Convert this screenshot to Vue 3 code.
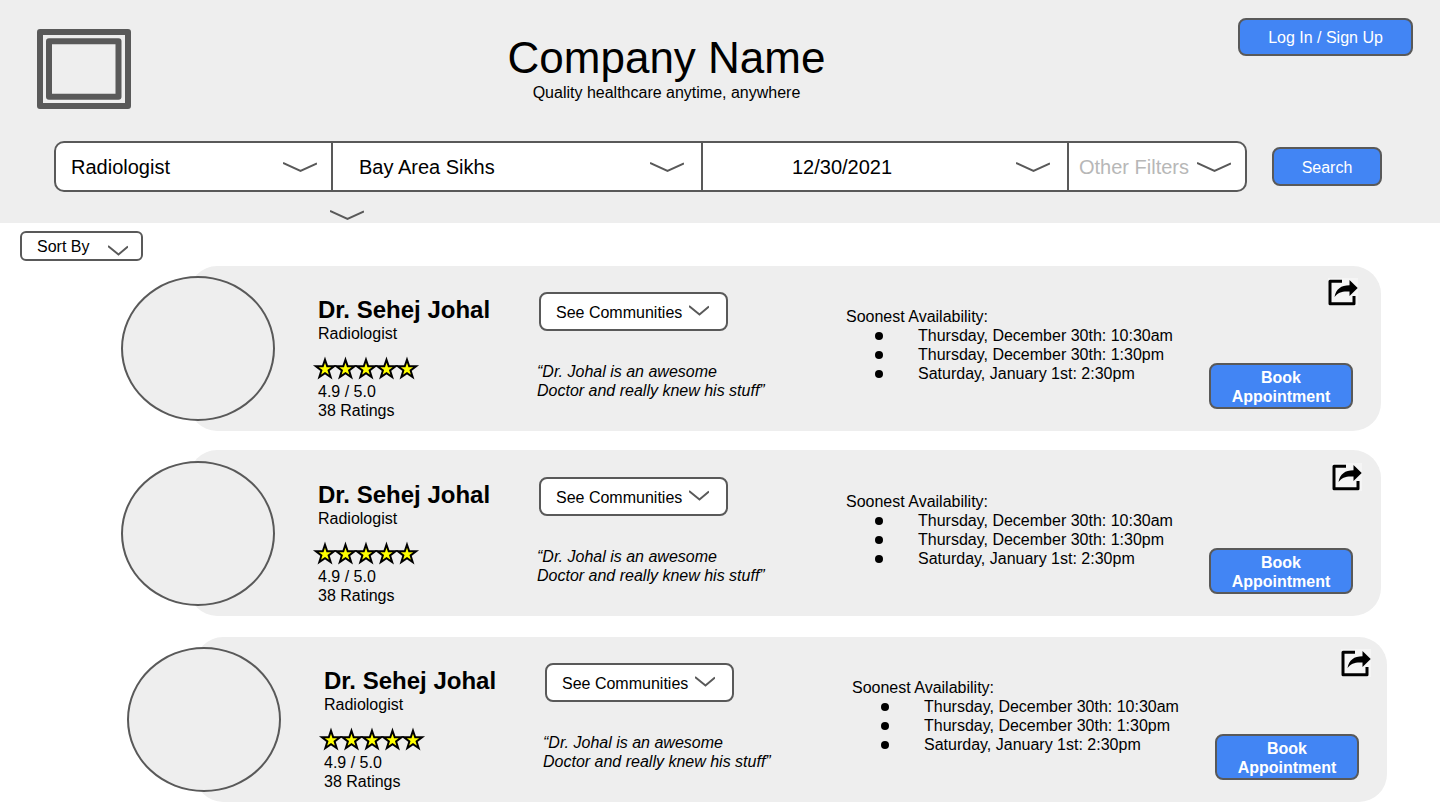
<script setup>
const filters = [
  { id: 'specialty', label: 'Specialty', value: 'Radiologist' },
  { id: 'community', label: 'Community', value: 'Bay Area Sikhs' },
  { id: 'date', label: 'Date', value: '12/30/2021' },
  { id: 'other', label: 'More filters', value: 'Other Filters' },
]

const doctors = [1, 2, 3].map((id) => ({
  id,
  name: 'Dr. Sehej Johal',
  specialty: 'Radiologist',
  score: '4.9 / 5.0',
  ratings: '38 Ratings',
  quote: ['“Dr. Johal is an awesome', 'Doctor and really knew his stuff”'],
  slots: [
    'Thursday, December 30th: 10:30am',
    'Thursday, December 30th: 1:30pm',
    'Saturday, January 1st: 2:30pm',
  ],
}))

const starCenters = [13, 33.5, 54, 74.5, 95]

function starPoints(cx, cy = 13.3, outer = 9.6, inner = 3.8) {
  return Array.from({ length: 10 }, (_, i) => {
    const r = i % 2 ? inner : outer
    const a = (Math.PI / 5) * i - Math.PI / 2
    return `${(cx + r * Math.cos(a)).toFixed(2)},${(cy + r * Math.sin(a)).toFixed(2)}`
  }).join(' ')
}
</script>

<template>
  <div class="page">
    <header class="header">
      <div class="top">
        <svg class="logo" viewBox="0 0 94 80" role="img" aria-label="Company logo">
          <rect x="3" y="3" width="88" height="74" />
          <rect x="12" y="12.300" width="69.500" height="55.500" />
        </svg>
        <div class="brand">
          <h1>Company Name</h1>
          <p>Quality healthcare anytime, anywhere</p>
        </div>
        <button type="button" class="btn login">Log In / Sign Up</button>
      </div>

      <form class="search" @submit.prevent>
        <div class="filters">
          <div v-for="f in filters" :key="f.id" class="filter" :class="f.id">
            <select :id="f.id" :aria-label="f.label">
              <option>{{ f.value }}</option>
            </select>
            <svg class="chevron wide" viewBox="0 0 34 11" aria-hidden="true">
              <path d="M0 1 L17.500 9 L34 1.500" />
            </svg>
          </div>
        </div>
        <button type="submit" class="btn submit">Search</button>
      </form>

      <svg class="wide expand" viewBox="0 0 34 11" aria-hidden="true">
        <path d="M0 1 L17.500 9 L34 1.500" />
      </svg>
    </header>

    <main>
      <div class="sort">
        <select id="sort" aria-label="Sort results">
          <option>Sort By</option>
        </select>
        <svg class="chevron small" viewBox="0 0 20 11" aria-hidden="true">
          <path d="M0 1 L10.500 9.500 L20 1.500" />
        </svg>
      </div>

      <section class="results" aria-label="Doctors">
        <article v-for="d in doctors" :key="d.id" class="card">
          <div class="avatar"></div>

          <div class="info">
            <h2>{{ d.name }}</h2>
            <p>{{ d.specialty }}</p>
            <svg class="stars" viewBox="0 0 108 24" role="img" aria-label="Five stars">
              <polygon v-for="cx in starCenters" :key="cx" :points="starPoints(cx)" />
            </svg>
            <p>{{ d.score }}</p>
            <p>{{ d.ratings }}</p>
          </div>

          <div class="about">
            <div class="communities">
              <select :id="`communities-${d.id}`" aria-label="Communities">
                <option>See Communities</option>
              </select>
              <svg class="chevron small" viewBox="0 0 20 11" aria-hidden="true">
                <path d="M0 1 L10.500 9.500 L20 1.500" />
              </svg>
            </div>
            <blockquote>{{ d.quote[0] }}<br />{{ d.quote[1] }}</blockquote>
          </div>

          <div class="availability">
            <p>Soonest Availability:</p>
            <ul>
              <li v-for="s in d.slots" :key="s">{{ s }}</li>
            </ul>
          </div>

          <div class="actions">
            <button type="button" class="share" aria-label="Share">
              <svg viewBox="0 0 30 28" aria-hidden="true">
                <path class="frame" d="M14 3.200 H2 V25.700 H26 V18" />
                <path d="M6.500 19 C8 11 13 7.200 21.500 7.200 V2 L29.700 10 L21.500 18 V13.500 C14 13 10 14.500 6.500 19 Z" />
              </svg>
            </button>
            <button type="button" class="btn book">Book<br />Appointment</button>
          </div>
        </article>
      </section>
    </main>
  </div>
</template>

<style>
body {
  background: #fff;
}
</style>

<style scoped>
.page {
  color: #000;
  font-family: "Liberation Sans", Arial, sans-serif;
  font-size: 16px;
  line-height: 19px;
}

h1,
h2,
p,
ul,
blockquote {
  margin: 0;
  padding: 0;
}

button,
select {
  margin: 0;
  font: inherit;
  color: inherit;
  cursor: pointer;
}

select {
  appearance: none;
  width: 100%;
  border: 0;
  background: transparent;
}

.header {
  background: #eee;
  padding-bottom: 2px;
}

.top {
  display: flex;
  align-items: flex-start;
  height: 141px;
  padding: 0 27px 0 37px;
}

.logo {
  width: 94px;
  height: 80px;
  margin-top: 29px;
  fill: none;
  stroke: #595959;
  stroke-width: 6;
  stroke-linejoin: round;
}

.brand {
  flex: 1;
  padding: 33px 36px 0 0;
  text-align: center;
}

h1 {
  font-size: 44px;
  font-weight: 400;
  line-height: 50px;
}

.btn {
  border: 2px solid #595959;
  border-radius: 8px;
  background: #4285f4;
  color: #fff;
}

.login {
  width: 175px;
  height: 38px;
  margin-top: 18px;
}

.search {
  display: flex;
  align-items: center;
  gap: 25px;
  padding: 0 58px 0 54px;
}

.filters {
  flex: 1;
  display: grid;
  grid-template-columns: 275fr 370fr 366fr 178fr;
  border: 2px solid #595959;
  border-radius: 10px;
  background: #fff;
  overflow: hidden;
}

.filter {
  position: relative;
  display: flex;
}

.filter + .filter {
  border-left: 2px solid #595959;
}

.filter select {
  height: 47px;
  padding: 0 48px 0 15px;
  font-size: 20px;
  line-height: 24px;
}

.filter.community select {
  padding-left: 26px;
}

.filter.date select {
  padding-left: 89px;
}

.filter.other select {
  padding-left: 10px;
  color: #b7b7b7;
}

.wide {
  width: 34px;
  height: 11px;
}

.small {
  width: 20px;
  height: 11px;
}

.wide,
.small {
  fill: none;
  stroke: #595959;
  stroke-width: 2;
}

.chevron {
  position: absolute;
  pointer-events: none;
}

.filter .chevron {
  top: 19px;
  right: 17px;
}

.filter.specialty .chevron,
.filter.other .chevron {
  right: 14px;
}

.submit {
  width: 110px;
  height: 39px;
  padding-top: 3px;
}

.expand {
  display: block;
  margin: 18px 0 0 330px;
}

.sort {
  position: relative;
  width: 123px;
  margin: 8px 0 5px 20px;
}

.sort select {
  display: block;
  height: 30px;
  padding: 0 36px 0 15px;
  border: 2px solid #595959;
  border-radius: 6px;
}

.sort .chevron {
  top: 14px;
  right: 15px;
}

.card {
  display: grid;
  grid-template-columns: 129px 219px 309px 1fr 172px;
  min-height: 165px;
  margin: 0 59px 0 189px;
  border-radius: 28px;
  background: #eee;
}

.card:nth-child(2) {
  margin-top: 19px;
  padding-top: 1px;
}

.card:nth-child(3) {
  margin: 21px 53px 0 195px;
}

.avatar {
  box-sizing: border-box;
  width: 154px;
  height: 145px;
  margin: 10px 0 0 -68px;
  border: 2px solid #595959;
  border-radius: 50%;
  background: #eee;
}

.info {
  padding-top: 30px;
}

h2 {
  font-size: 24px;
  font-weight: 700;
  line-height: 28px;
}

.stars {
  display: block;
  width: 108px;
  height: 24px;
  margin: 13px 0 2px -6px;
  fill: #ff0;
  stroke: #000;
  stroke-width: 2;
}

.about {
  padding-top: 26px;
}

.communities {
  position: relative;
  width: 189px;
  margin-left: 2px;
}

.communities select {
  display: block;
  height: 39px;
  padding: 2px 36px 0 15px;
  border: 2px solid #595959;
  border-radius: 8px;
  background: #fff;
}

.communities .chevron {
  top: 13px;
  right: 19px;
}

blockquote {
  margin-top: 31px;
  font-style: italic;
  white-space: nowrap;
}

.availability {
  padding-top: 41px;
}

ul {
  list-style: none;
}

li {
  display: flex;
  align-items: center;
  gap: 35px;
  padding-left: 29px;
}

li::before {
  content: "";
  width: 8px;
  height: 8px;
  margin-top: 1px;
  border-radius: 50%;
  background: #000;
}

.actions {
  display: flex;
  flex-direction: column;
  align-items: flex-end;
  justify-content: space-between;
  padding: 12px 0 22px;
}

.share {
  width: 30px;
  height: 28px;
  margin-right: 23px;
  padding: 0;
  border: 0;
  background: #f5f5f5;
}

.card:nth-child(2) .share {
  margin-right: 19px;
}

.card:nth-child(3) .share {
  margin-right: 16px;
}

.share svg {
  display: block;
  width: 30px;
  height: 28px;
}

.frame {
  fill: none;
  stroke: #000;
  stroke-width: 3;
  stroke-linejoin: round;
}

.book {
  width: 144px;
  margin-right: 28px;
  padding: 3px 0 1px;
  font-weight: 700;
}
</style>
